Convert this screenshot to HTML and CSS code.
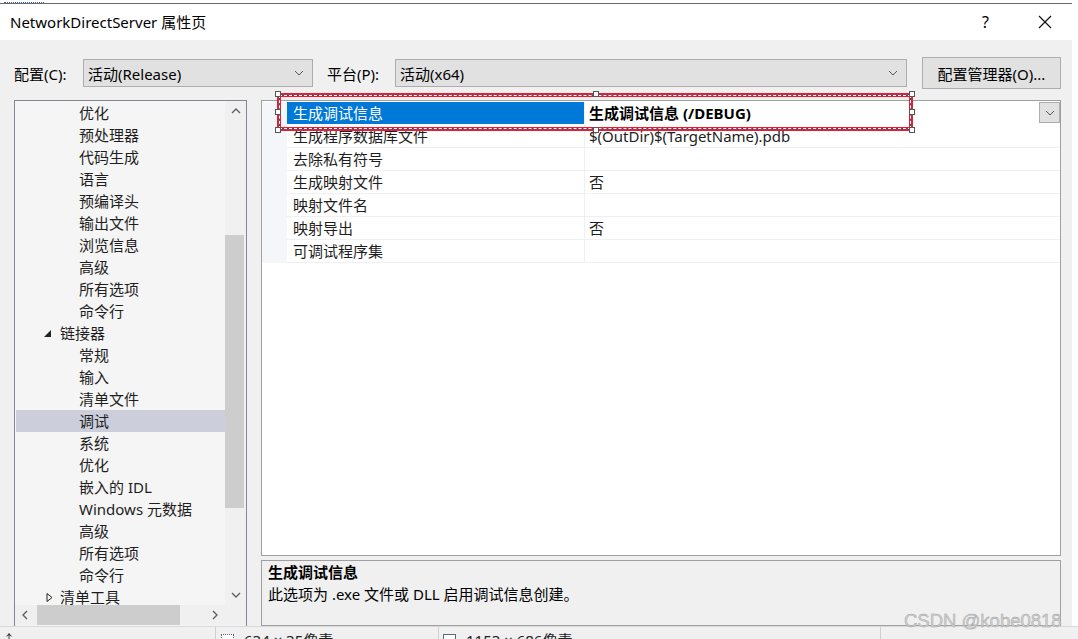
FILE: index.html
```html
<!DOCTYPE html>
<html lang="zh-CN">
<head>
    <meta charset="UTF-8">
    <title>NetworkDirectServer 属性页</title>
    <link rel="stylesheet" href="styles.css">
</head>
<body>
    <div class="topstrip"><span class="menu-frag"></span></div>

    <div class="window">
        <header class="titlebar">
            <span class="title">NetworkDirectServer 属性页</span>
            <span class="help">?</span>
            <svg class="close" width="14" height="14" viewBox="0 0 14 14"><path d="M1 1 L13 13 M13 1 L1 13" stroke="#111" stroke-width="1.2" fill="none"/></svg>
        </header>

        <div class="dialog">
            <div class="config-row">
                <label class="lbl lbl-config">配置(C):</label>
                <div class="combo combo-config">
                    <span>活动(Release)</span>
                    <svg class="chev" width="10" height="6" viewBox="0 0 10 6"><polyline points="1,1 5,5 9,1" fill="none" stroke="#555" stroke-width="1"/></svg>
                </div>
                <label class="lbl lbl-platform">平台(P):</label>
                <div class="combo combo-platform">
                    <span>活动(x64)</span>
                    <svg class="chev" width="10" height="6" viewBox="0 0 10 6"><polyline points="1,1 5,5 9,1" fill="none" stroke="#555" stroke-width="1"/></svg>
                </div>
                <button class="btn">配置管理器(O)...</button>
            </div>

            <div class="main">
                <div class="tree">
                    <div class="tree-items">
                        <div class="tree-item lvl2">优化</div>
                        <div class="tree-item lvl2">预处理器</div>
                        <div class="tree-item lvl2">代码生成</div>
                        <div class="tree-item lvl2">语言</div>
                        <div class="tree-item lvl2">预编译头</div>
                        <div class="tree-item lvl2">输出文件</div>
                        <div class="tree-item lvl2">浏览信息</div>
                        <div class="tree-item lvl2">高级</div>
                        <div class="tree-item lvl2">所有选项</div>
                        <div class="tree-item lvl2">命令行</div>
                        <div class="tree-item lvl1">
                            <svg class="expander" width="9" height="9" viewBox="0 0 9 9"><polygon points="8,1 8,8 1,8" fill="#222"/></svg>链接器
                        </div>
                        <div class="tree-item lvl2">常规</div>
                        <div class="tree-item lvl2">输入</div>
                        <div class="tree-item lvl2">清单文件</div>
                        <div class="tree-item lvl2 selected">调试</div>
                        <div class="tree-item lvl2">系统</div>
                        <div class="tree-item lvl2">优化</div>
                        <div class="tree-item lvl2">嵌入的 IDL</div>
                        <div class="tree-item lvl2">Windows 元数据</div>
                        <div class="tree-item lvl2">高级</div>
                        <div class="tree-item lvl2">所有选项</div>
                        <div class="tree-item lvl2">命令行</div>
                        <div class="tree-item lvl1">
                            <svg class="expander collapsed" width="9" height="11" viewBox="0 0 9 11"><polygon points="3,1.5 8,5.5 3,9.5" fill="none" stroke="#222" stroke-width="1"/></svg>清单工具
                        </div>
                    </div>
                    <div class="vscroll">
                        <div class="arrow"><svg width="10" height="6" viewBox="0 0 10 6"><polyline points="1,5 5,1 9,5" fill="none" stroke="#606060" stroke-width="1.4"/></svg></div>
                        <div class="vtrack"><div class="vthumb"></div></div>
                        <div class="arrow"><svg width="10" height="6" viewBox="0 0 10 6"><polyline points="1,1 5,5 9,1" fill="none" stroke="#606060" stroke-width="1.4"/></svg></div>
                    </div>
                    <div class="hscroll">
                        <div class="arrow"><svg width="6" height="10" viewBox="0 0 6 10"><polyline points="5,1 1,5 5,9" fill="none" stroke="#606060" stroke-width="1.4"/></svg></div>
                        <div class="htrack"><div class="hthumb"></div></div>
                        <div class="arrow"><svg width="6" height="10" viewBox="0 0 6 10"><polyline points="1,1 5,5 1,9" fill="none" stroke="#606060" stroke-width="1.4"/></svg></div>
                    </div>
                    <div class="corner"></div>
                </div>

                <div class="right">
                    <div class="grid">
                        <div class="prop-row">
                            <div class="gutter"></div>
                            <div class="name selected">生成调试信息</div>
                            <div class="value bold">
                                <span>生成调试信息 (/DEBUG)</span>
                                <div class="drop"><svg width="10" height="6" viewBox="0 0 10 6"><polyline points="1,1 5,5 9,1" fill="none" stroke="#555" stroke-width="1"/></svg></div>
                            </div>
                        </div>
                        <div class="prop-row">
                            <div class="gutter"></div>
                            <div class="name">生成程序数据库文件</div>
                            <div class="value">$(OutDir)$(TargetName).pdb</div>
                        </div>
                        <div class="prop-row">
                            <div class="gutter"></div>
                            <div class="name">去除私有符号</div>
                            <div class="value"></div>
                        </div>
                        <div class="prop-row">
                            <div class="gutter"></div>
                            <div class="name">生成映射文件</div>
                            <div class="value">否</div>
                        </div>
                        <div class="prop-row">
                            <div class="gutter"></div>
                            <div class="name">映射文件名</div>
                            <div class="value"></div>
                        </div>
                        <div class="prop-row">
                            <div class="gutter"></div>
                            <div class="name">映射导出</div>
                            <div class="value">否</div>
                        </div>
                        <div class="prop-row">
                            <div class="gutter"></div>
                            <div class="name">可调试程序集</div>
                            <div class="value"></div>
                        </div>
                    </div>
                    <div class="desc">
                        <div class="desc-title">生成调试信息</div>
                        <div class="desc-text">此选项为 .exe 文件或 DLL 启用调试信息创建。</div>
                    </div>
                </div>
            </div>
        </div>
    </div>

    <div class="statusbar">
        <div class="sb-cell sb-first"><span class="sb-arrow">↑</span></div>
        <div class="sb-cell sb-sel"><span class="sb-icon dotted"></span>634 × 35像素</div>
        <div class="sb-cell sb-size"><span class="sb-icon"></span>1153 × 686像素</div>
        <div class="sb-cell sb-rest"></div>
    </div>

    <!-- annotation drawn over the first property row -->
    <div class="annot">
        <span class="handle h-tl"></span><span class="handle h-tm"></span><span class="handle h-tr"></span>
        <span class="handle h-ml"></span><span class="handle h-mr"></span>
        <span class="handle h-bl"></span><span class="handle h-bm"></span><span class="handle h-br"></span>
    </div>

    <div class="watermark">CSDN @kobe0818</div>
</body>
</html>
```

FILE: styles.css
```css
* {
    box-sizing: border-box;
}
body {
    margin: 0;
    background: #fff;
    font-family: "Noto Sans", "Noto Sans CJK SC", sans-serif;
    font-size: 15px;
    color: #000;
    width: 1078px;
    height: 639px;
    overflow: hidden;
    position: relative;
}
.topstrip {
    height: 4px;
    width: 1072px;
    border-bottom: 1px solid #6a6a6a;
    padding-left: 4px;
}
.menu-frag {
    display: inline-block;
    width: 40px;
    height: 3px;
    border-bottom: 1px dotted #2a5db0;
    vertical-align: top;
}
.window {
    width: 1072px;
}
.titlebar {
    height: 36px;
    background: #fff;
    display: flex;
    align-items: center;
    padding-left: 10px;
}
.title {
    flex: 1;
    font-size: 15px;
    padding-bottom: 1px;
}
.help {
    font-size: 16px;
    margin-right: 49px;
}
.close {
    margin-right: 20px;
}
.dialog {
    background: #f0f0f0;
    height: 586px;
    padding: 17px 11px 0 14px;
}
.config-row {
    display: flex;
    align-items: center;
    height: 32px;
}
.lbl {
    flex: none;
}
.lbl-config {
    width: 69px;
}
.lbl-platform {
    width: 68px;
    margin-left: 14px;
}
.combo {
    height: 28px;
    background: #e1e1e1;
    border: 1px solid #adadad;
    display: flex;
    align-items: center;
    justify-content: space-between;
    padding: 0 8px 0 4px;
}
.combo-config {
    width: 230px;
}
.combo-platform {
    width: 512px;
}
.btn {
    margin-left: 15px;
    width: 139px;
    height: 32px;
    background: #e1e1e1;
    border: 1px solid #adadad;
    font-family: inherit;
    font-size: 15px;
    color: #000;
    padding: 0;
}
.main {
    display: flex;
    margin-top: 11px;
    height: 526px;
}
.tree {
    width: 233px;
    height: 540px;
    border: 1px solid #828790;
    background: #f5f5f5;
    display: grid;
    grid-template-columns: 210px 21px;
    grid-template-rows: 504px 20px;
}
.tree-items {
    overflow: hidden;
    padding: 1px 0 0 1px;
}
.tree-item {
    height: 22px;
    line-height: 22px;
    white-space: nowrap;
    color: #1e1e1e;
}
.tree-item.lvl2 {
    padding-left: 63px;
}
.tree-item.lvl1 {
    padding-left: 27px;
    display: flex;
    align-items: center;
}
.expander {
    margin-right: 8px;
}
.expander.collapsed {
    margin-left: 1px;
    margin-right: 7px;
}
.tree-item.selected {
    background: #cccedb;
}
.vscroll {
    background: #f0f0f0;
    display: flex;
    flex-direction: column;
}
.vscroll .arrow {
    height: 20px;
    display: flex;
    align-items: center;
    justify-content: center;
}
.vtrack {
    flex: 1;
    padding-top: 114px;
}
.vthumb {
    height: 273px;
    width: 19px;
    background: #cdcdcd;
}
.hscroll {
    background: #f0f0f0;
    display: flex;
}
.hscroll .arrow {
    width: 20px;
    display: flex;
    align-items: center;
    justify-content: center;
}
.htrack {
    flex: 1;
    padding-left: 2px;
}
.hthumb {
    width: 143px;
    height: 20px;
    background: #cdcdcd;
}
.corner {
    background: #f0f0f0;
}
.right {
    margin-left: 14px;
    width: 801px;
    display: flex;
    flex-direction: column;
}
.grid {
    flex: none;
    height: 456px;
    border: 1px solid #a0a0a0;
    background: #fff;
    padding-top: 1px;
}
.prop-row {
    display: grid;
    grid-template-columns: 25px 298px 1fr;
    height: 23px;
}
.gutter {
    background: #f4f6f9;
}
.name {
    border-right: 1px solid #eef0f4;
    border-bottom: 1px solid #eef0f4;
    padding-left: 6px;
    line-height: 22px;
    color: #1e1e1e;
    white-space: nowrap;
}
.name.selected {
    background: #0078d7;
    border-bottom-color: #fff;
    color: #fff;
}
.value {
    border-bottom: 1px solid #eef0f4;
    padding-left: 4px;
    line-height: 22px;
    color: #1e1e1e;
    white-space: nowrap;
}
.value.bold {
    font-weight: bold;
    color: #000;
    display: flex;
    justify-content: space-between;
    border-bottom-color: #fff;
}
.drop {
    width: 21px;
    height: 21px;
    background: #e1e1e1;
    border: 1px solid #adadad;
    display: flex;
    align-items: center;
    justify-content: center;
}
.desc {
    flex: none;
    margin-top: 4px;
    height: 66px;
    border: 1px solid #a0a0a0;
    background: #f0f0f0;
    padding: 0 6px;
    line-height: 22px;
}
.desc-title {
    font-weight: bold;
}
.statusbar {
    position: absolute;
    left: 0;
    top: 626px;
    width: 1078px;
    height: 13px;
    border-top: 1px solid #d9d9d9;
    background: #f0f0f0;
    display: flex;
    overflow: hidden;
    color: #222;
}
.sb-cell {
    height: 30px;
    padding-top: 3px;
    line-height: 20px;
    white-space: nowrap;
    display: flex;
    align-items: flex-start;
}
.sb-first {
    width: 215px;
    padding-left: 3px;
    font-size: 12px;
}
.sb-sel {
    width: 223px;
    border-left: 1px solid #d0d0d0;
    padding-left: 5px;
}
.sb-size {
    width: 442px;
    border-left: 1px solid #d0d0d0;
    padding-left: 4px;
}
.sb-rest {
    flex: 1;
    border-left: 1px solid #d0d0d0;
}
.sb-icon {
    width: 13px;
    height: 12px;
    margin: 4px 10px 0 0;
    border: 1px solid #5a6a80;
    background: #fff;
}
.sb-icon.dotted {
    border-style: dotted;
}
.annot {
    position: absolute;
    left: 277px;
    top: 93px;
    width: 636px;
    height: 38px;
    border: 2px solid #e5202c;
}
.annot::before,
.annot::after {
    content: "";
    position: absolute;
    inset: 0;
}
.annot::before {
    border: 1px solid #2b4e9c;
}
.annot::after {
    border: 1px dashed #fff;
    box-shadow: inset 0 0 0 1px #e5202c;
}
.handle {
    position: absolute;
    width: 6px;
    height: 6px;
    background: #fff;
    border: 1px solid #555;
    z-index: 1;
}
.h-tl { left: -4px; top: -4px; }
.h-tm { left: 314px; top: -4px; }
.h-tr { right: -4px; top: -4px; }
.h-ml { left: -4px; top: 14px; }
.h-mr { right: -4px; top: 14px; }
.h-bl { left: -4px; bottom: -4px; }
.h-bm { left: 314px; bottom: -4px; }
.h-br { right: -4px; bottom: -4px; }
.watermark {
    position: absolute;
    left: 904px;
    top: 610px;
    font-family: "Liberation Sans", Arial, sans-serif;
    font-size: 18.5px;
    color: #d2d2d2;
    -webkit-text-stroke: 0.4px #9c9c9c;
    white-space: nowrap;
}
```
